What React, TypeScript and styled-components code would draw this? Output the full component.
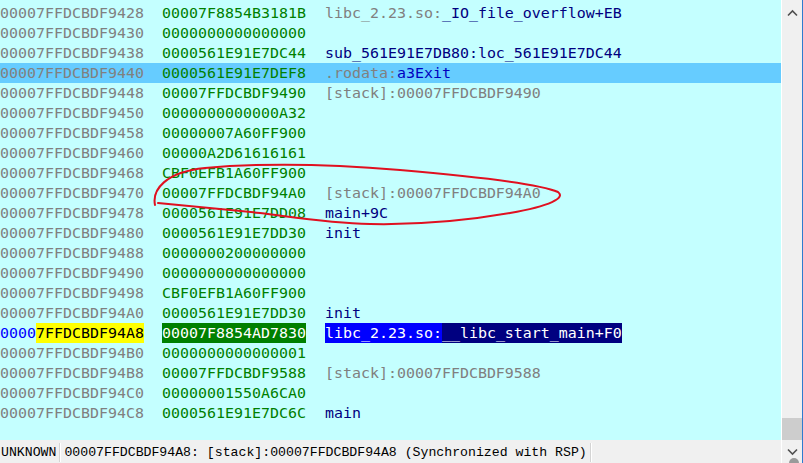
import React from "react";
import styled, { createGlobalStyle } from "styled-components";

const Global = createGlobalStyle`
  html, body { margin: 0; padding: 0; background: #C4FFFF; }
  body { width: 803px; height: 463px; overflow: hidden; }
`;

const Window = styled.div`
  width: 803px;
  height: 463px;
  display: flex;
  border-right: 1px solid #2E7BCF;
  box-sizing: border-box;
  overflow: hidden;
`;

const Main = styled.div`
  flex: 0 0 781px;
  height: 100%;
  display: flex;
  flex-direction: column;
  min-width: 0;
`;

const List = styled.div`
  position: relative;
  flex: 1;
  background: #C4FFFF;
  padding-top: 3px;
  font-family: "DejaVu Sans Mono", "Liberation Mono", monospace;
  font-size: 14.95px;
  white-space: pre;
`;

const Row = styled.div<{ $hl?: boolean }>`
  display: grid;
  grid-template-columns: 162px 163px 1fr;
  height: 20px;
  line-height: 20px;
  background: ${(p) => (p.$hl ? "#66CCFF" : "transparent")};
`;

const Cell = styled.div`
  overflow: hidden;
`;

const Chunk = styled.span<{ $c: string; $bg?: string }>`
  display: inline-block;
  height: 20px;
  color: ${(p) => p.$c};
  background: ${(p) => p.$bg ?? "transparent"};
`;

const Annotation = styled.svg`
  position: absolute;
  left: 0;
  top: 0;
  pointer-events: none;
`;

const StatusBar = styled.div`
  flex: 0 0 23px;
  background: #F0F0F0;
  display: flex;
  align-items: center;
  padding-top: 2px;
  box-sizing: border-box;
  font-family: "Liberation Mono", monospace;
  font-size: 13.2px;
  color: #000;
  white-space: pre;
`;

const Segment = styled.div<{ $pl: number }>`
  height: 19px;
  line-height: 19px;
  padding-left: ${(p) => p.$pl}px;
  padding-right: 3px;
  border-right: 1px solid #D4D4D4;
  box-shadow: 1px 0 0 #FFFFFF;
`;

const ScrollBar = styled.div`
  flex: 0 0 21px;
  height: 100%;
  display: flex;
  flex-direction: column;
  background: #F0F0F0;
  border-left: 1px solid #FFFFFF;
  box-sizing: border-box;
  position: relative;
  overflow: hidden;
`;

const ArrowBox = styled.div<{ $h: number }>`
  flex: 0 0 ${(p) => p.$h}px;
  display: flex;
  align-items: center;
  justify-content: center;
`;

const Track = styled.div`
  flex: 1;
  display: flex;
  flex-direction: column;
  justify-content: flex-end;
`;

const Thumb = styled.div`
  height: 22px;
  background: #CDCDCD;
`;

const Grip = styled.div`
  position: absolute;
  left: 7px;
  bottom: -5px;
  width: 10px;
  height: 10px;
  border-radius: 50%;
  background: #9A9A9A;
`;

const GRAY = "#808080";
const GREEN = "#008000";
const NAVY = "#000080";

type Part = { t: string; c: string; bg?: string };
type RowData = { a: string; v: string; n?: Part[]; hl?: boolean; sel?: boolean };

const rows: RowData[] = [
  { a: "9428", v: "00007F8854B3181B", n: [{ t: "libc_2.23.so:", c: GRAY }, { t: "_IO_file_overflow+EB", c: NAVY }] },
  { a: "9430", v: "0000000000000000" },
  { a: "9438", v: "0000561E91E7DC44", n: [{ t: "sub_561E91E7DB80:loc_561E91E7DC44", c: NAVY }] },
  { a: "9440", v: "0000561E91E7DEF8", n: [{ t: ".rodata:", c: GRAY }, { t: "a3Exit", c: "#0000C0" }], hl: true },
  { a: "9448", v: "00007FFDCBDF9490", n: [{ t: "[stack]:00007FFDCBDF9490", c: GRAY }] },
  { a: "9450", v: "0000000000000A32" },
  { a: "9458", v: "00000007A60FF900" },
  { a: "9460", v: "00000A2D61616161" },
  { a: "9468", v: "CBF0EFB1A60FF900" },
  { a: "9470", v: "00007FFDCBDF94A0", n: [{ t: "[stack]:00007FFDCBDF94A0", c: GRAY }] },
  { a: "9478", v: "0000561E91E7DD08", n: [{ t: "main+9C", c: NAVY }] },
  { a: "9480", v: "0000561E91E7DD30", n: [{ t: "init", c: NAVY }] },
  { a: "9488", v: "0000000200000000" },
  { a: "9490", v: "0000000000000000" },
  { a: "9498", v: "CBF0EFB1A60FF900" },
  { a: "94A0", v: "0000561E91E7DD30", n: [{ t: "init", c: NAVY }] },
  {
    a: "94A8",
    v: "00007F8854AD7830",
    n: [
      { t: "libc_2.23.so:", c: "#FFFFFF", bg: "#0000FF" },
      { t: "__libc_start_main+F0", c: "#FFFFFF", bg: "#000080" },
    ],
    sel: true,
  },
  { a: "94B0", v: "0000000000000001" },
  { a: "94B8", v: "00007FFDCBDF9588", n: [{ t: "[stack]:00007FFDCBDF9588", c: GRAY }] },
  { a: "94C0", v: "00000001550A6CA0" },
  { a: "94C8", v: "0000561E91E7DC6C", n: [{ t: "main", c: NAVY }] },
];

const Chevron = ({ up }: { up?: boolean }) => (
  <svg width="11" height="8" viewBox="0 0 11 8">
    <path
      d={up ? "M1 6.5 L5.5 2 L10 6.5" : "M1 1.5 L5.5 6 L10 1.5"}
      fill="none"
      stroke="#505050"
      strokeWidth="1.6"
    />
  </svg>
);

export default function App() {
  return (
    <>
      <Global />
      <Window>
        <Main>
          <List>
            {rows.map((r) => (
              <Row key={r.a} $hl={r.hl}>
                <Cell>
                  {r.sel ? (
                    <>
                      <Chunk $c="#0000FF">0000</Chunk>
                      <Chunk $c="#000000" $bg="#FFFF00">{"7FFDCBDF" + r.a}</Chunk>
                    </>
                  ) : (
                    <Chunk $c={GRAY}>{"00007FFDCBDF" + r.a}</Chunk>
                  )}
                </Cell>
                <Cell>
                  {r.sel ? (
                    <Chunk $c="#FFFFFF" $bg="#008000">{r.v}</Chunk>
                  ) : (
                    <Chunk $c={GREEN}>{r.v}</Chunk>
                  )}
                </Cell>
                <Cell>
                  {r.n?.map((p, i) => (
                    <Chunk key={i} $c={p.c} $bg={p.bg}>
                      {p.t}
                    </Chunk>
                  ))}
                </Cell>
              </Row>
            ))}
            <Annotation width="781" height="440" viewBox="0 0 781 440">
              <path
                d="M155 205 C152 190, 165 172, 205 168 C260 163, 330 164, 400 170 C470 176, 540 184, 558 192 C566 198, 550 206, 510 213 C470 220, 420 225, 370 224 C330 223, 300 218, 260 213 C210 208, 180 205, 158 203"
                fill="none"
                stroke="#E01020"
                strokeWidth="2"
                strokeLinecap="round"
              />
            </Annotation>
          </List>
          <StatusBar>
            <Segment $pl={1}>UNKNOWN</Segment>
            <Segment $pl={4}>00007FFDCBDF94A8: [stack]:00007FFDCBDF94A8 (Synchronized with RSP)</Segment>
          </StatusBar>
        </Main>
        <ScrollBar>
          <ArrowBox $h={26}>
            <Chevron up />
          </ArrowBox>
          <Track>
            <Thumb />
          </Track>
          <ArrowBox $h={23}>
            <Chevron />
          </ArrowBox>
          <Grip />
        </ScrollBar>
      </Window>
    </>
  );
}
